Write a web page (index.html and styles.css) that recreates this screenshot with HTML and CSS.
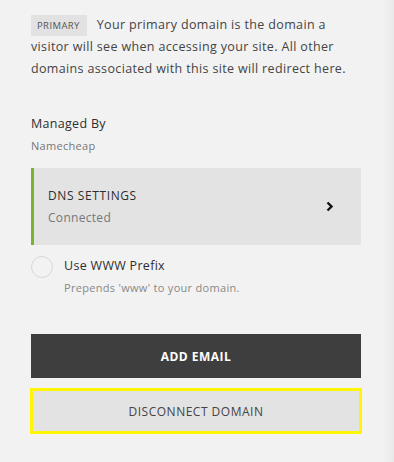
FILE: index.html
```html
<!DOCTYPE html>
<html lang="en">
<head>
    <meta charset="UTF-8">
    <meta name="viewport" content="width=device-width, initial-scale=1.0">
    <title>Domain settings</title>
    <link rel="stylesheet" href="styles.css">
</head>
<body>
    <div class="panel">
        <p class="intro"><span class="badge">PRIMARY</span>Your primary domain is the domain a visitor will see when accessing your site. All other domains associated with this site will redirect here.</p>

        <div class="managed">
            <div class="managed-title">Managed By</div>
            <div class="managed-name">Namecheap</div>
        </div>

        <div class="dns-card">
            <div class="dns-text">
                <div class="dns-title">DNS SETTINGS</div>
                <div class="dns-status">Connected</div>
            </div>
            <svg class="chevron" width="8" height="11" viewBox="0 0 8 11">
                <path d="M1.5 1.5 L5.5 5.5 L1.5 9.5" fill="none" stroke="#111" stroke-width="2.4"/>
            </svg>
        </div>

        <div class="option">
            <span class="radio"></span>
            <div class="option-text">
                <div class="option-title">Use WWW Prefix</div>
                <div class="option-desc">Prepends 'www' to your domain.</div>
            </div>
        </div>

        <button class="btn btn-dark">ADD EMAIL</button>
        <button class="btn btn-light">DISCONNECT DOMAIN</button>
    </div>
</body>
</html>
```

FILE: styles.css
```css
body {
    margin: 0;
    font-family: "Open Sans", Arial, sans-serif;
    color: #333;
    background: linear-gradient(to right, #f2f2f2 0, #f2f2f2 383px, #e9e9e9 394px);
    min-height: 462px;
}
.panel {
    width: 330px;
    padding: 14px 0 0 31px;
}
.intro {
    margin: 0;
    font-size: 12.5px;
    letter-spacing: 0.35px;
    line-height: 22px;
    color: #444;
}
.badge {
    display: inline-block;
    vertical-align: top;
    margin: 1px 10px 0 0;
    background-color: #e2e2e2;
    color: #555;
    font-size: 9.5px;
    letter-spacing: 0.4px;
    line-height: 13px;
    padding: 4px 7px 4px 6px;
}
.managed {
    margin-top: 34px;
}
.managed-title {
    font-size: 12.5px;
    font-weight: 500;
    letter-spacing: 0.3px;
    line-height: 20px;
    color: #2e2e2e;
}
.managed-name {
    margin-top: 2px;
    font-size: 11px;
    letter-spacing: 0.3px;
    line-height: 20px;
    color: #777;
}
.dns-card {
    display: flex;
    align-items: center;
    justify-content: space-between;
    margin-top: 12px;
    height: 77px;
    background-color: #e3e3e3;
    border-left: 3px solid #7ab32e;
    padding: 0 27px 0 14px;
}
.dns-title {
    font-size: 12px;
    letter-spacing: 0.6px;
    line-height: 20px;
    color: #2e2e2e;
    font-weight: 500;
}
.dns-status {
    margin-top: 2px;
    font-size: 12px;
    letter-spacing: 0.3px;
    line-height: 20px;
    color: #777;
}
.option {
    display: flex;
    align-items: flex-start;
    margin-top: 11px;
}
.radio {
    width: 20px;
    height: 20px;
    border: 1px solid #d8d8d8;
    border-radius: 50%;
    flex: none;
}
.option-text {
    margin-left: 11px;
}
.option-title {
    font-size: 12.5px;
    font-weight: 500;
    letter-spacing: 0.3px;
    line-height: 22px;
    margin-top: -1px;
    color: #2e2e2e;
}
.option-desc {
    font-size: 11px;
    letter-spacing: 0.3px;
    line-height: 20px;
    color: #888;
    margin-top: 1px;
}
.btn {
    display: block;
    width: 330px;
    border: none;
    font-family: inherit;
    font-size: 12px;
    letter-spacing: 0.5px;
    cursor: pointer;
}
.btn-dark {
    margin-top: 36px;
    height: 44px;
    background-color: #3e3e3e;
    color: #fff;
    font-weight: 700;
}
.btn-light {
    margin-top: 10px;
    margin-left: -1px;
    width: 332px;
    height: 46px;
    background-color: #e3e3e3;
    border: 3px solid #fff500;
    color: #444;
    font-weight: 500;
}
```
